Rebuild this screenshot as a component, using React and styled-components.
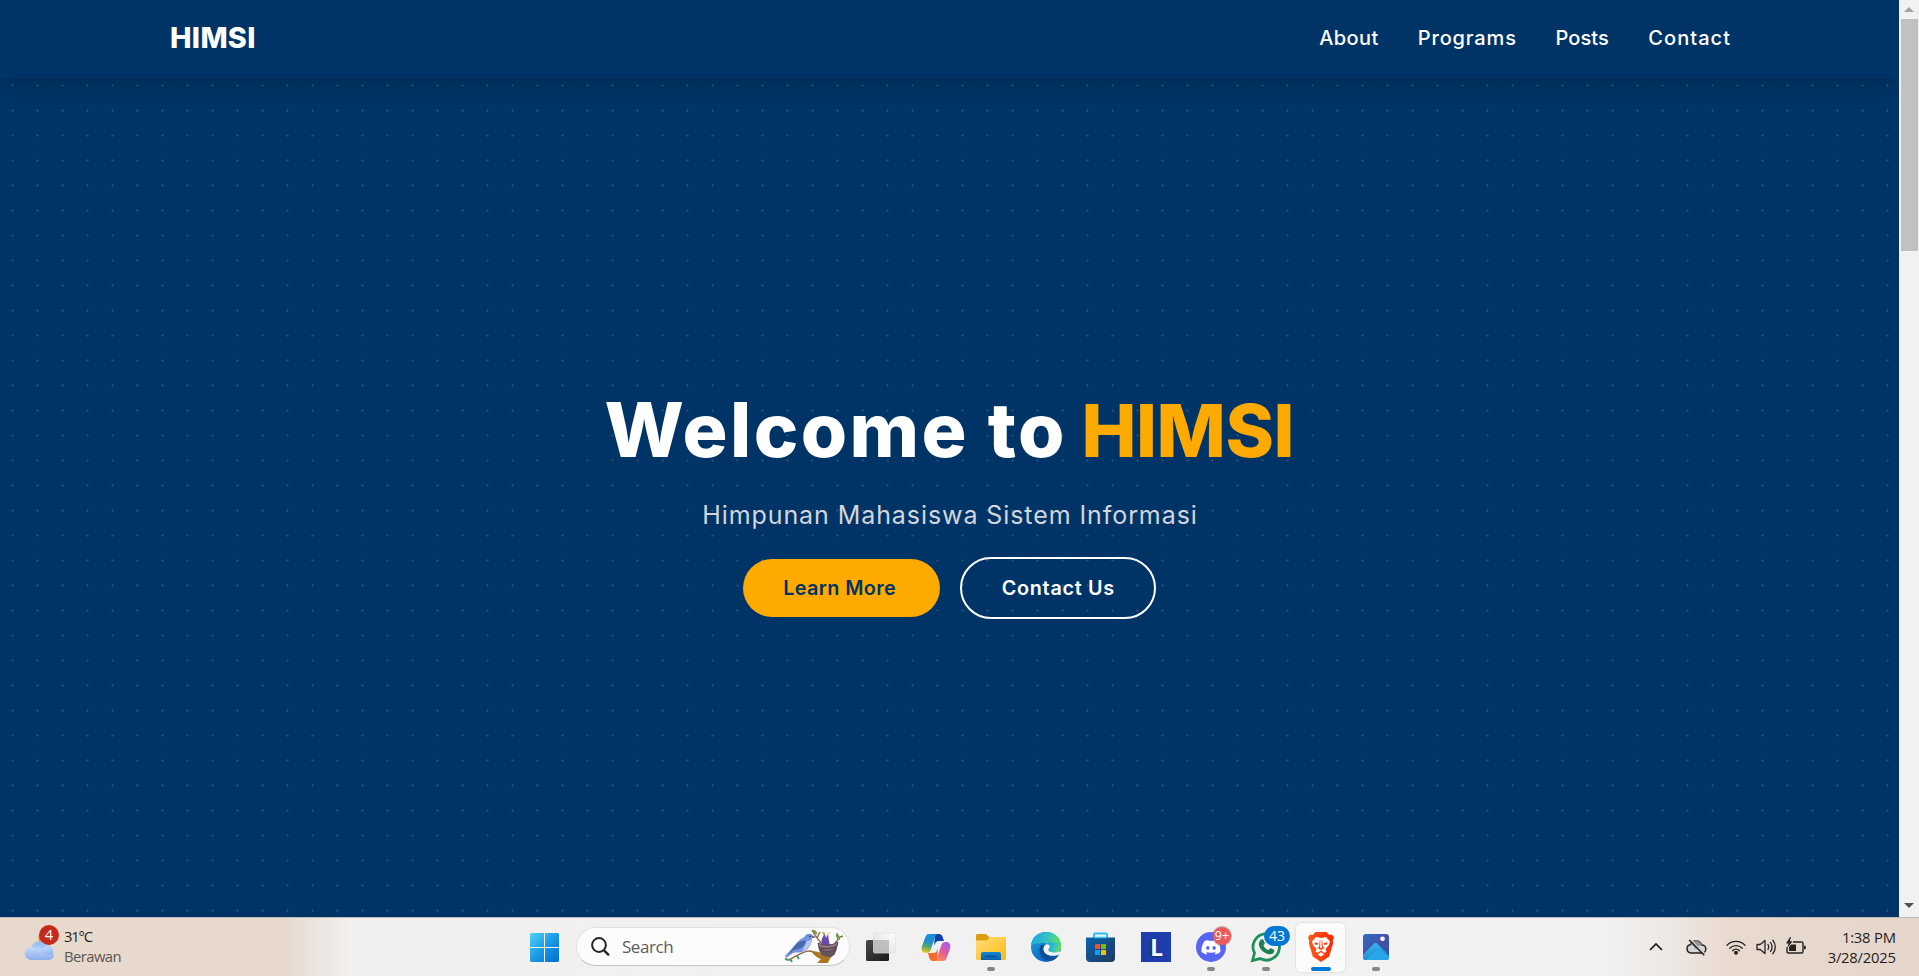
import React from 'react';
import styled, { createGlobalStyle } from 'styled-components';

const GlobalStyle = createGlobalStyle`
  *, *::before, *::after { box-sizing: border-box; }
  body { margin: 0; overflow: hidden; background: #003466; }
`;

const Screen = styled.div`
  width: 1919px;
  height: 976px;
  display: flex;
  flex-direction: column;
  overflow: hidden;
`;

const Viewport = styled.div`
  height: 917px;
  display: flex;
  font-family: Inter, "Liberation Sans", sans-serif;
`;

const Page = styled.div`
  width: 1899px;
  display: flex;
  flex-direction: column;
  overflow: hidden;
  background: #003466;
`;

/* Text whose letters are spread by the track prop, without a trailing gap */
const Tracked = styled.span`
  display: inline-block;
  white-space: nowrap;
  letter-spacing: ${(p) => p.$track || 0}px;
  margin-right: ${(p) => -(p.$track || 0)}px;
`;

const Header = styled.header`
  position: relative;
  z-index: 1;
  flex: none;
  height: 78px;
  padding: 0 169px 2px 170px;
  display: flex;
  align-items: center;
  justify-content: space-between;
  background: #003466;
  box-shadow: 0 4px 20px rgba(0, 0, 0, 0.2);
  color: #fff;
`;

const Logo = styled.a`
  font-size: 28.8px;
  font-weight: 800;
  line-height: 40px;
  padding-bottom: 1px;
`;

const Nav = styled.nav`
  display: flex;
  gap: 39.5px;
`;

const NavLink = styled.a`
  font-size: 20px;
  font-weight: 500;
  line-height: 30px;
`;

const Hero = styled.main`
  flex: 1;
  padding-top: 5px;
  display: flex;
  flex-direction: column;
  align-items: center;
  justify-content: center;
  background-image: radial-gradient(circle, rgba(255, 255, 255, 0.12) 1.05px, transparent 1.1px);
  background-size: 25px 25px;
  background-position: 0 -5px;
`;

const Title = styled.h1`
  margin: 0 0 16px;
  display: flex;
  align-items: baseline;
  gap: 17px;
  font-size: 75px;
  font-weight: 800;
  line-height: 96px;
  color: #fff;
`;

const Accent = styled(Tracked)`
  font-size: 73.5px;
  color: #ffaa00;
`;

const Subtitle = styled.p`
  margin: 0 0 22px;
  font-size: 25px;
  font-weight: 400;
  line-height: 40px;
  color: #d1d6dc;
`;

const Actions = styled.div`
  display: flex;
  align-items: center;
  gap: 20px;
`;

const Button = styled.a`
  display: flex;
  align-items: center;
  justify-content: center;
  width: ${(p) => (p.$outline ? 196 : 197)}px;
  height: ${(p) => (p.$outline ? 62 : 58)}px;
  padding-right: ${(p) => (p.$outline ? 0 : 4)}px;
  border: ${(p) => (p.$outline ? '2px solid #fff' : '0')};
  border-radius: 31px;
  background: ${(p) => (p.$outline ? 'transparent' : '#ffaa00')};
  color: ${(p) => (p.$outline ? '#fff' : '#003466')};
  font-size: 19.8px;
  font-weight: 600;
`;

const Scrollbar = styled.div`
  width: 20px;
  padding: 0 1px 0 2px;
  display: flex;
  flex-direction: column;
  background: #f1f1f1;
`;

const ScrollArrow = styled.div`
  height: 19px;
  margin-top: ${(p) => (p.$down ? 'auto' : 0)};
  padding-left: 3px;
  display: flex;
  align-items: center;
`;

const ArrowShape = styled.i`
  width: 0;
  height: 0;
  border: 5px solid transparent;
  ${(p) => (p.$down ? 'border-top-color: #505050; border-bottom: 0; margin-bottom: 5px;' : 'border-bottom-color: #a3a3a3; border-top: 0;')}
`;

const Thumb = styled.div`
  height: 232px;
  background: #c1c1c1;
`;

const Taskbar = styled.footer`
  height: 59px;
  display: grid;
  grid-template-columns: 1fr auto 1fr;
  border-top: 1px solid #bdbab9;
  background: linear-gradient(90deg, #e8d9cd 0, #e8d9ce 285px, #f1f0ef 350px, #f2f2f2 1600px, #eee8e4 1670px, #e9dacf 1730px, #e5d6cc 1919px);
  font-family: "Open Sans", "Noto Sans", sans-serif;
  color: #1e1d1d;
`;

const Weather = styled.div`
  display: flex;
  padding-left: 24px;
  gap: 8px;
`;

const WeatherIcon = styled.div`
  position: relative;
  width: 32px;
  height: 58px;
  padding-top: 8px;
`;

const Badge = styled.span`
  position: absolute;
  top: ${(p) => p.$top}px;
  left: ${(p) => p.$left}px;
  width: ${(p) => p.$w}px;
  height: ${(p) => p.$h}px;
  border-radius: 12px;
  display: flex;
  align-items: center;
  justify-content: center;
  background: ${(p) => p.$color};
  box-shadow: ${(p) => (p.$ring ? '0 0 0 1px rgba(120, 110, 110, 0.5)' : 'none')};
  color: #fff;
  font-size: ${(p) => p.$size}px;
  line-height: 1;
  white-space: nowrap;
`;

const Lines = styled.div`
  display: flex;
  flex-direction: column;
  padding-top: ${(p) => (p.$end ? 0 : 8)}px;
  font-size: 14.8px;
  line-height: 20px;
  align-items: ${(p) => (p.$end ? 'flex-end' : 'flex-start')};
`;

const Muted = styled(Tracked)`
  color: #5b5552;
`;

const Apps = styled.div`
  display: flex;
  align-items: center;
  padding-left: 1px;
`;

const AppSlot = styled.div`
  position: relative;
  width: 55px;
  height: 58px;
  display: flex;
  align-items: center;
  justify-content: center;
`;

const ActiveTile = styled.div`
  width: 49px;
  height: 49px;
  display: flex;
  align-items: center;
  justify-content: center;
  border-radius: 5px;
  background: #fbfbfb;
  box-shadow: 0 0 1px 1px #e4e3e3;
`;

const Indicator = styled.i`
  position: absolute;
  bottom: 5px;
  left: 50%;
  width: ${(p) => (p.$active ? 20 : 8)}px;
  height: 4px;
  border-radius: 2px;
  transform: translateX(-50%);
  background: ${(p) => (p.$active ? '#0078d4' : '#868686')};
`;

const Search = styled.div`
  width: 274px;
  height: 39px;
  margin: 0 3px 1px 4px;
  padding: 0 5px 0 14px;
  display: flex;
  align-items: center;
  border: 1px solid #e2e2e2;
  border-bottom-color: #c4c4c4;
  border-radius: 20px;
  background: #fcfcfc;
  color: #5c5c5c;
  font-size: 17px;
`;

const SearchLabel = styled.span`
  flex: 1;
  padding-left: 12px;
  letter-spacing: -0.45px;
`;

const Tray = styled.div`
  display: flex;
  align-items: center;
  justify-content: flex-end;
  padding-right: 23px;
`;

const TrayIcon = styled.div`
  width: 20px;
  height: 20px;
  margin-right: ${(p) => p.$gap}px;
`;

const Svg = styled.svg`
  display: block;
  flex: none;
  overflow: visible;
`;

const Cloud = () => (
  <Svg width="32" height="38" viewBox="0 0 32 38">
    <defs>
      <linearGradient id="cl" x1="0" y1="0" x2="0.3" y2="1">
        <stop offset="0" stopColor="#8fb2ee" /><stop offset="0.55" stopColor="#b9d3fa" /><stop offset="1" stopColor="#83a9ea" />
      </linearGradient>
      <linearGradient id="cl2" x1="0" y1="0" x2="0" y2="1">
        <stop offset="0" stopColor="#c3dafc" /><stop offset="1" stopColor="#8daeee" />
      </linearGradient>
    </defs>
    <circle cx="22" cy="12.500" r="7.500" fill="#f0861c" />
    <path d="M8 34a7 7 0 0 1-.5-13A9 9 0 0 1 23 18.500a7.900 7.900 0 0 1 0 15.500z" fill="url(#cl)" />
    <path d="M7.500 34a6.500 6.500 0 1 1 4.500-11c2 2 3.500 5 12 5.500h6.500a6.500 6.500 0 0 1-6.500 5.500z" fill="url(#cl2)" />
    <path d="M12 18q5-5 11 1l-5 3z" fill="#9fc0f5" />
  </Svg>
);

const Windows = () => (
  <Svg width="29" height="29" viewBox="0 0 29 29">
    <defs>
      <linearGradient id="win" gradientUnits="userSpaceOnUse" x1="0" y1="0" x2="29" y2="29">
        <stop offset="0" stopColor="#51d3fc" /><stop offset="0.5" stopColor="#1a9ae4" /><stop offset="1" stopColor="#006fd0" />
      </linearGradient>
    </defs>
    <path d="M1 0h13v14H0V1zM15 0h13l1 1v13H15zM0 15h14v14H1l-1-1zM15 15h14v13l-1 1H15z" fill="url(#win)" />
  </Svg>
);

const Magnifier = () => (
  <Svg width="19" height="20" viewBox="0 0 19 20" fill="none" stroke="#262626" strokeLinecap="round">
    <circle cx="8" cy="8" r="6.900" strokeWidth="2" />
    <path d="M13 13.300l4.300 4.300" strokeWidth="2.400" />
  </Svg>
);

const Birds = () => (
  <Svg width="60" height="35" viewBox="0 0 60 35">
    <path d="M5 31C15 25 24 20 29 23l4 4c2 2 4 3 10 2" fill="none" stroke="#8c6845" strokeWidth="1.500" />
    <path d="M28 22c1 4 5 6 9 8l-4 4h11c1-4 4-7 7-9l-7 1c-5 0-8-4-16-4z" fill="#a97820" />
    <path d="M37 14L31 6l-3-5M33 9l3-6M51 14l5-6 3-1M54 10l-1-6" fill="none" stroke="#94703d" strokeWidth="1.400" />
    <ellipse cx="31" cy="3" rx="3" ry="1.200" fill="#6c9d4a" transform="rotate(40 31 3)" />
    <ellipse cx="54" cy="8" rx="3.200" ry="1.600" fill="#60a44b" transform="rotate(65 54 8)" />
    <path d="M37 18c0-7 2-12 4-13l1 4 2-4 1 7 1 5z" fill="#6a48ad" />
    <path d="M40 6l-2-3 3 1zM44 6l2-3" stroke="#d59e45" strokeWidth=".7" fill="#d59e45" />
    <path d="M34 14q10 5 20-1c-1 9-3 15-9 15-7 0-11-5-11-14z" fill="#65505f" />
    <path d="M34 14q10 5 20-1l-1 4q-9 4-18 1zM36 21q8 3 15-1" fill="#957780" stroke="#564052" strokeWidth=".8" />
    <path d="M1 27l11-12C15 10 20 9 21 7c2-3 7-3 8 0l2 1-3 1c0 6-3 12-10 14-4 1-6 0-9 1l-7 5z" fill="#7593dd" />
    <path d="M9 19c3-5 8-8 13-7-1 6-6 8-12 9l-6 5z" fill="#4868ad" />
    <path d="M23 12c3 0 4-1 5-2-1 6-4 11-10 12z" fill="#b5c5f4" />
    <path d="M28 7l4 1-3 1z" fill="#514a55" /><circle cx="26" cy="7.300" r=".8" fill="#182047" />
    <path d="M5 31l-4-1M6 30l2 3M13 27l2 3" stroke="#4c965c" strokeWidth="2" />
  </Svg>
);

const TaskView = () => (
  <Svg width="30" height="30" viewBox="0 0 30 30">
    <defs>
      <linearGradient id="tv" x1="0" y1="0" x2="1" y2="1"><stop stopColor="#4b4b49" /><stop offset="1" stopColor="#191919" /></linearGradient>
      <linearGradient id="tw" x1="1" y1="0" x2="0" y2="1"><stop stopColor="#fff" stopOpacity=".95" /><stop offset="1" stopColor="#d8d8d8" stopOpacity=".78" /></linearGradient>
    </defs>
    <rect x="0" y="8" width="23" height="21" rx="1.500" fill="url(#tv)" />
    <rect x="7.500" y="1" width="22" height="20" rx="1.500" fill="url(#tw)" stroke="#dfdfdf" strokeWidth=".7" />
    <path d="M8 8h15v12.500H9l-1-1z" fill="#b9b9b9" opacity=".75" />
  </Svg>
);

const Copilot = () => (
  <Svg width="28" height="27" viewBox="0 0 28 27">
    <defs>
      <linearGradient id="ca" x1="0.400" y1="0" x2="0.200" y2="1">
        <stop offset="0" stopColor="#1592dc" /><stop offset=".4" stopColor="#208fd0" /><stop offset=".65" stopColor="#58a66b" /><stop offset="1" stopColor="#f0cc13" />
      </linearGradient>
      <linearGradient id="cb" x1="0.800" y1="0" x2="0.200" y2="1">
        <stop offset="0" stopColor="#a55af0" /><stop offset=".5" stopColor="#e25c9d" /><stop offset="1" stopColor="#ff914d" />
      </linearGradient>
    </defs>
    <path d="M13 0h4c2 0 3 1 4 4l1 3h-5c-3 0-4 2-5 5z" fill="#123fae" />
    <path d="M15 27h-4c-2 0-3-1-4-4l-1-4h5c3 0 4-2 5-5z" fill="#f36b2e" />
    <path d="M7 0h9c-3 0-3 3-4 6l-3 9c-1 3-2 4-5 4-4 0-5-3-4-7L3 4c1-3 2-4 4-4z" fill="url(#ca)" />
    <path d="M21 27h-9c3 0 3-3 4-6l3-9c1-3 2-4 5-4 4 0 5 3 4 7l-3 8c-1 3-2 4-4 4z" fill="url(#cb)" />
  </Svg>
);

const Folder = () => (
  <Svg width="30" height="28" viewBox="0 0 30 28">
    <defs>
      <linearGradient id="fo" x1="0" y1="0" x2="1" y2="1"><stop stopColor="#ffdf79" /><stop offset="1" stopColor="#fbb914" /></linearGradient>
      <linearGradient id="fb" x1="0" y1="0" x2="0" y2="1"><stop stopColor="#1587d2" /><stop offset="1" stopColor="#0b62ad" /></linearGradient>
    </defs>
    <path d="M1 1h9l3 3h15c1 0 2 1 2 2v4H0V2z" fill="#dc9d0d" />
    <path d="M0 7.500h11L14 4h15l1 1v21l-1 1H1l-1-1z" fill="url(#fo)" />
    <path d="M5 27v-6c0-1.500 1-2 2-2h16c1.500 0 2 1 2 2v6z" fill="url(#fb)" />
    <path d="M9 23.300h12" stroke="#064e90" strokeWidth="1.300" />
  </Svg>
);

const Edge = () => (
  <Svg width="30" height="30" viewBox="0 0 30 30">
    <defs>
      <linearGradient id="e1" x1="0" y1=".2" x2="1" y2=".5"><stop stopColor="#19a5e9" /><stop offset=".55" stopColor="#35c4be" /><stop offset="1" stopColor="#6be34e" /></linearGradient>
      <linearGradient id="e2" x1="0" y1="0" x2=".4" y2="1"><stop stopColor="#20a6e4" /><stop offset="1" stopColor="#0869c1" /></linearGradient>
    </defs>
    <circle cx="15" cy="15" r="15" fill="url(#e2)" />
    <path d="M0 13C1 5 7 0 15 0c9 0 15 6 15 13 0 5-3 7.500-7 7.500-3 0-5-1-5-2.500 0-1 1-1.500 1-3 0-2-3-4-6-4-6 0-11 1-13 2z" fill="url(#e1)" />
    <path d="M10 13c-3 4-2 12 5 15 5 2 10 0 12.500-5-3 2-8 2-11 0-4-2-5-6-3-10-1-.5-2-.5-3.500 0z" fill="#124e98" />
    <path d="M15 12.500c-4 2-3 8 1 10 4 2 9 1.500 12 0l2-2.500-3-1c-4 2-10 1.500-9.500-1.500.2-1 1.500-1.500 1.300-3-.3-1.500-2-2.500-3.800-2z" fill="#f2f2f2" />
    <path d="M17 12c2 .5 3 2 1.500 4.500C17 18 20 20.500 24 20.500c3 0 6-2 6-5v-5H17z" fill="url(#e1)" />
  </Svg>
);

const Store = () => (
  <Svg width="29" height="30" viewBox="0 0 29 30">
    <defs><linearGradient id="st" x1="0" y1="0" x2="1" y2="1"><stop stopColor="#0a63ae" /><stop offset="1" stopColor="#20375f" /></linearGradient></defs>
    <path d="M8 7V2.500Q8 1.500 9 1.500h11q1 0 1 1V7" fill="none" stroke="#2dbdf0" strokeWidth="2" />
    <path d="M0 5.500h29V26q0 4-4 4H4q-4 0-4-4z" fill="url(#st)" />
    <path d="M8 5.500h13" stroke="#38c8f5" strokeWidth="1.500" />
    <path d="M9 12h5v5H9z" fill="#f25022" /><path d="M15 12h5v5h-5z" fill="#7fba00" />
    <path d="M9 18h5v5H9z" fill="#00a4ef" /><path d="M15 18h5v5h-5z" fill="#ffb900" />
  </Svg>
);

const LTile = styled.div`
  width: 30px;
  height: 30px;
  padding-left: 2px;
  display: flex;
  align-items: center;
  justify-content: center;
  background: #1e3cab;
  color: #fff;
  font: 900 23px/28px Lato, sans-serif;
  text-shadow: -1px 1px 0 #123a66, -2px 1px 0 #123a66;
`;

const Discord = () => (
  <Svg width="30" height="30" viewBox="0 0 30 30">
    <circle cx="15" cy="15" r="15" fill="#5865f2" />
    <path transform="translate(5.500 5.700) scale(.79)" fill="#fff" d="M20.317 4.370a19.791 19.791 0 0 0-4.885-1.515.074.074 0 0 0-.079.037c-.210.375-.444.864-.608 1.250a18.270 18.270 0 0 0-5.487 0 12.640 12.640 0 0 0-.617-1.250.077.077 0 0 0-.079-.037A19.736 19.736 0 0 0 3.677 4.370a.070.070 0 0 0-.032.027C.533 9.046-.320 13.580.099 18.057a.082.082 0 0 0 .031.057 19.900 19.900 0 0 0 5.993 3.030.078.078 0 0 0 .084-.028 14.090 14.090 0 0 0 1.226-1.994.076.076 0 0 0-.041-.106 13.107 13.107 0 0 1-1.872-.892.077.077 0 0 1-.008-.128c.126-.094.252-.192.372-.292a.074.074 0 0 1 .077-.010c3.928 1.793 8.180 1.793 12.062 0a.074.074 0 0 1 .078.010c.120.098.246.198.373.292a.077.077 0 0 1-.006.127 12.299 12.299 0 0 1-1.873.892.077.077 0 0 0-.041.107c.360.698.772 1.362 1.225 1.993a.076.076 0 0 0 .084.028 19.839 19.839 0 0 0 6.002-3.030.077.077 0 0 0 .032-.054c.500-5.177-.838-9.674-3.549-13.660a.061.061 0 0 0-.031-.030zM8.020 15.330c-1.183 0-2.157-1.085-2.157-2.419 0-1.333.956-2.419 2.157-2.419 1.210 0 2.176 1.096 2.157 2.420 0 1.333-.956 2.418-2.157 2.418zm7.975 0c-1.183 0-2.157-1.085-2.157-2.419 0-1.333.955-2.419 2.157-2.419 1.210 0 2.176 1.096 2.157 2.420 0 1.333-.946 2.418-2.157 2.418z" />
  </Svg>
);

const WhatsApp = () => (
  <Svg width="30" height="30" viewBox="0 0 30 30">
    <path d="M1.500 28.500l2-7.500A13.200 13.200 0 1 1 9 26.600z" fill="none" stroke="#1f9158" strokeWidth="2.800" />
    <path d="M9.500 8c1-1 2.500-1 3 0l1.300 3c.4 1-1.300 1.800-1.300 2.500.8 2 2.500 3.500 4.800 4.500 1 0 1.500-2 2.600-1.700l3 1.500c1 .7 0 3-1 3.700-2 1.400-5 .8-7.500-.5-3-1.500-5.500-4.500-6.300-7C7.500 11.500 8.300 9 9.500 8z" fill="#1b8150" />
  </Svg>
);

const Brave = () => (
  <Svg width="26" height="30" viewBox="0 0 26 30">
    <defs><linearGradient id="br" x1="0" y1="0" x2="1" y2="0"><stop stopColor="#ff5a1a" /><stop offset="1" stopColor="#fa2704" /></linearGradient></defs>
    <path d="M7.500 0h11l2.800 3 2.600-.4L26 5.500 24.700 9l.5 2-4 13.500L13 30l-8.200-5.500L.8 11l.5-2L0 5.500l2.100-2.900 2.600.4z" fill="url(#br)" />
    <path d="M8 5l5 1 5-1 4 4.500-1 3.500-3.500 4 1 2.500-2 1.500-3.500-2.500-3.500 2.500-2-1.500 1-2.500L5 13 4 9.500z" fill="#fff" />
    <path d="M6.500 10.300l4 .7-1 2-2.500-.5zM19.500 10.300l-4 .7 1 2 2.500-.5zM11.800 8l-.8 7-1.800 1 3.800 2 3.800-2-1.800-1-.8-7z" fill="#fb471a" />
    <path d="M12.300 8h1.400v8l-.7.500-.7-.5z" fill="#fff" />
    <path d="M13 20.300l3.200 2-3.200 2.500-3.200-2.500z" fill="#fff" />
  </Svg>
);

const Photos = () => (
  <Svg width="26" height="26" viewBox="0 0 26 26">
    <defs>
      <linearGradient id="ph" x1="0" y1="0" x2="1" y2="1"><stop stopColor="#2a6fc2" /><stop offset=".5" stopColor="#4450a8" /><stop offset="1" stopColor="#245a9f" /></linearGradient>
      <linearGradient id="pm" x1="0" y1="0" x2=".6" y2="1"><stop stopColor="#45c8f4" /><stop offset="1" stopColor="#1679ce" /></linearGradient>
      <clipPath id="pc"><rect width="26" height="26" rx="3" /></clipPath>
    </defs>
    <g clipPath="url(#pc)">
      <rect width="26" height="26" fill="url(#ph)" />
      <path d="M0 21L11 9.500q1.500-1.300 3 0L26 21v5H0z" fill="url(#pm)" />
      <path d="M3 26L14.500 15q1.500-1.300 3 0L26 22.500V26z" fill="#2aa5ea" />
      <circle cx="19.500" cy="4.800" r="2.400" fill="#f1f7ff" />
    </g>
  </Svg>
);

const Chevron = () => (
  <Svg width="20" height="20" viewBox="0 0 20 20"><path d="M4 13l6-6 6 6" fill="none" stroke="#1f1f1f" strokeWidth="1.700" /></Svg>
);

const CloudOff = () => (
  <Svg width="20" height="20" viewBox="0 0 20 20">
    <path d="M5 16a4.300 4.300 0 0 1-.5-8.500A6 6 0 0 1 15.700 8 4 4 0 0 1 16 16z" fill="#d5d2d0" stroke="#222" strokeWidth="1.500" />
    <path d="M4.700 8Q7 2.500 12 4q3 1 3.700 4-2.700 0-4 2.500L9 12Q8 8 4.700 8z" fill="#939291" />
    <path d="M4.500 2.500l14.500 14.500" stroke="#d9d5d2" strokeWidth="1.200" />
    <path d="M3.200 3l15 15.200" stroke="#222" strokeWidth="1.500" />
  </Svg>
);

const Wifi = () => (
  <Svg width="20" height="20" viewBox="0 0 20 20" fill="none" stroke="#252322" strokeWidth="1.300" strokeLinecap="round">
    <path d="M1 8.200a12.700 12.700 0 0 1 18 0M3.800 11.200a8.700 8.700 0 0 1 12.400 0M6.500 13.700a5 5 0 0 1 7 0" />
    <circle cx="10" cy="15.700" r="1.300" fill="#252322" />
  </Svg>
);

const Speaker = () => (
  <Svg width="20" height="20" viewBox="0 0 20 20" fill="none" stroke="#252322" strokeWidth="1.300" strokeLinecap="round" strokeLinejoin="round">
    <path d="M1 7.500h3.200L9 3.500v13l-4.800-4H1zM12 7.500q1.500 2.500 0 5M14.500 5.500q3 4.500 0 9M16.800 3.200q5 6.800 0 13.600" />
  </Svg>
);

const Battery = () => (
  <Svg width="20" height="20" viewBox="0 0 20 20">
    <path d="M7 5h8.500Q17 5 17 6.500v8q0 1.500-1.500 1.500h-13Q1 16 1 14.500V10" fill="none" stroke="#252322" strokeWidth="1.400" />
    <path d="M18 8.500q2 0 2 2t-2 2zM5 7.500h5V14H3v-4z" fill="#252322" />
    <path d="M4 0L0 6.500h2.500L1.300 11 6.500 4.300H3.800L5 0z" fill="#252322" />
  </Svg>
);

const links = [
  ['About', 0.4],
  ['Programs', 0.85],
  ['Posts', 0.1],
  ['Contact', 1.05],
];

export default function App() {
  return (
    <Screen>
      <GlobalStyle />
      <Viewport>
        <Page>
          <Header>
            <Logo><Tracked $track={0.3}>HIMSI</Tracked></Logo>
            <Nav>
              {links.map(([label, track]) => (
                <NavLink key={label}><Tracked $track={track}>{label}</Tracked></NavLink>
              ))}
            </Nav>
          </Header>
          <Hero>
            <Title>
              <Tracked $track={2.4}>Welcome to</Tracked>
              <Accent $track={-0.45}>HIMSI</Accent>
            </Title>
            <Subtitle><Tracked $track={0.92}>Himpunan Mahasiswa Sistem Informasi</Tracked></Subtitle>
            <Actions>
              <Button><Tracked $track={0.4}>Learn More</Tracked></Button>
              <Button $outline><Tracked $track={0.7}>Contact Us</Tracked></Button>
            </Actions>
          </Hero>
        </Page>
        <Scrollbar>
          <ScrollArrow><ArrowShape /></ScrollArrow>
          <Thumb />
          <ScrollArrow $down><ArrowShape $down /></ScrollArrow>
        </Scrollbar>
      </Viewport>
      <Taskbar>
        <Weather>
          <WeatherIcon>
            <Cloud />
            <Badge $top={7} $left={15} $w={20} $h={20} $color="#c42b1c" $size={14.5}>4</Badge>
          </WeatherIcon>
          <Lines>
            <Tracked $track={-1.2}>31°C</Tracked>
            <Muted $track={-0.55}>Berawan</Muted>
          </Lines>
        </Weather>
        <Apps>
          <AppSlot><Windows /></AppSlot>
          <Search>
            <Magnifier />
            <SearchLabel>Search</SearchLabel>
            <Birds />
          </Search>
          <AppSlot><TaskView /></AppSlot>
          <AppSlot><Copilot /></AppSlot>
          <AppSlot><Folder /><Indicator /></AppSlot>
          <AppSlot><Edge /></AppSlot>
          <AppSlot><Store /></AppSlot>
          <AppSlot><LTile>L</LTile></AppSlot>
          <AppSlot>
            <Discord />
            <Badge $top={9} $left={30} $w={18} $h={18} $color="#ed5a5c" $size={12.5} $ring>9+</Badge>
            <Indicator />
          </AppSlot>
          <AppSlot>
            <WhatsApp />
            <Badge $top={8} $left={26} $w={26} $h={20} $color="#0078d4" $size={14}>43</Badge>
            <Indicator />
          </AppSlot>
          <AppSlot><ActiveTile><Brave /></ActiveTile><Indicator $active /></AppSlot>
          <AppSlot><Photos /><Indicator /></AppSlot>
        </Apps>
        <Tray>
          <TrayIcon $gap={20}><Chevron /></TrayIcon>
          <TrayIcon $gap={20}><CloudOff /></TrayIcon>
          <TrayIcon $gap={10}><Wifi /></TrayIcon>
          <TrayIcon $gap={10}><Speaker /></TrayIcon>
          <TrayIcon $gap={22}><Battery /></TrayIcon>
          <Lines $end>
            <Tracked $track={-0.2}>1:38 PM</Tracked>
            <Tracked $track={-0.22}>3/28/2025</Tracked>
          </Lines>
        </Tray>
      </Taskbar>
    </Screen>
  );
}
